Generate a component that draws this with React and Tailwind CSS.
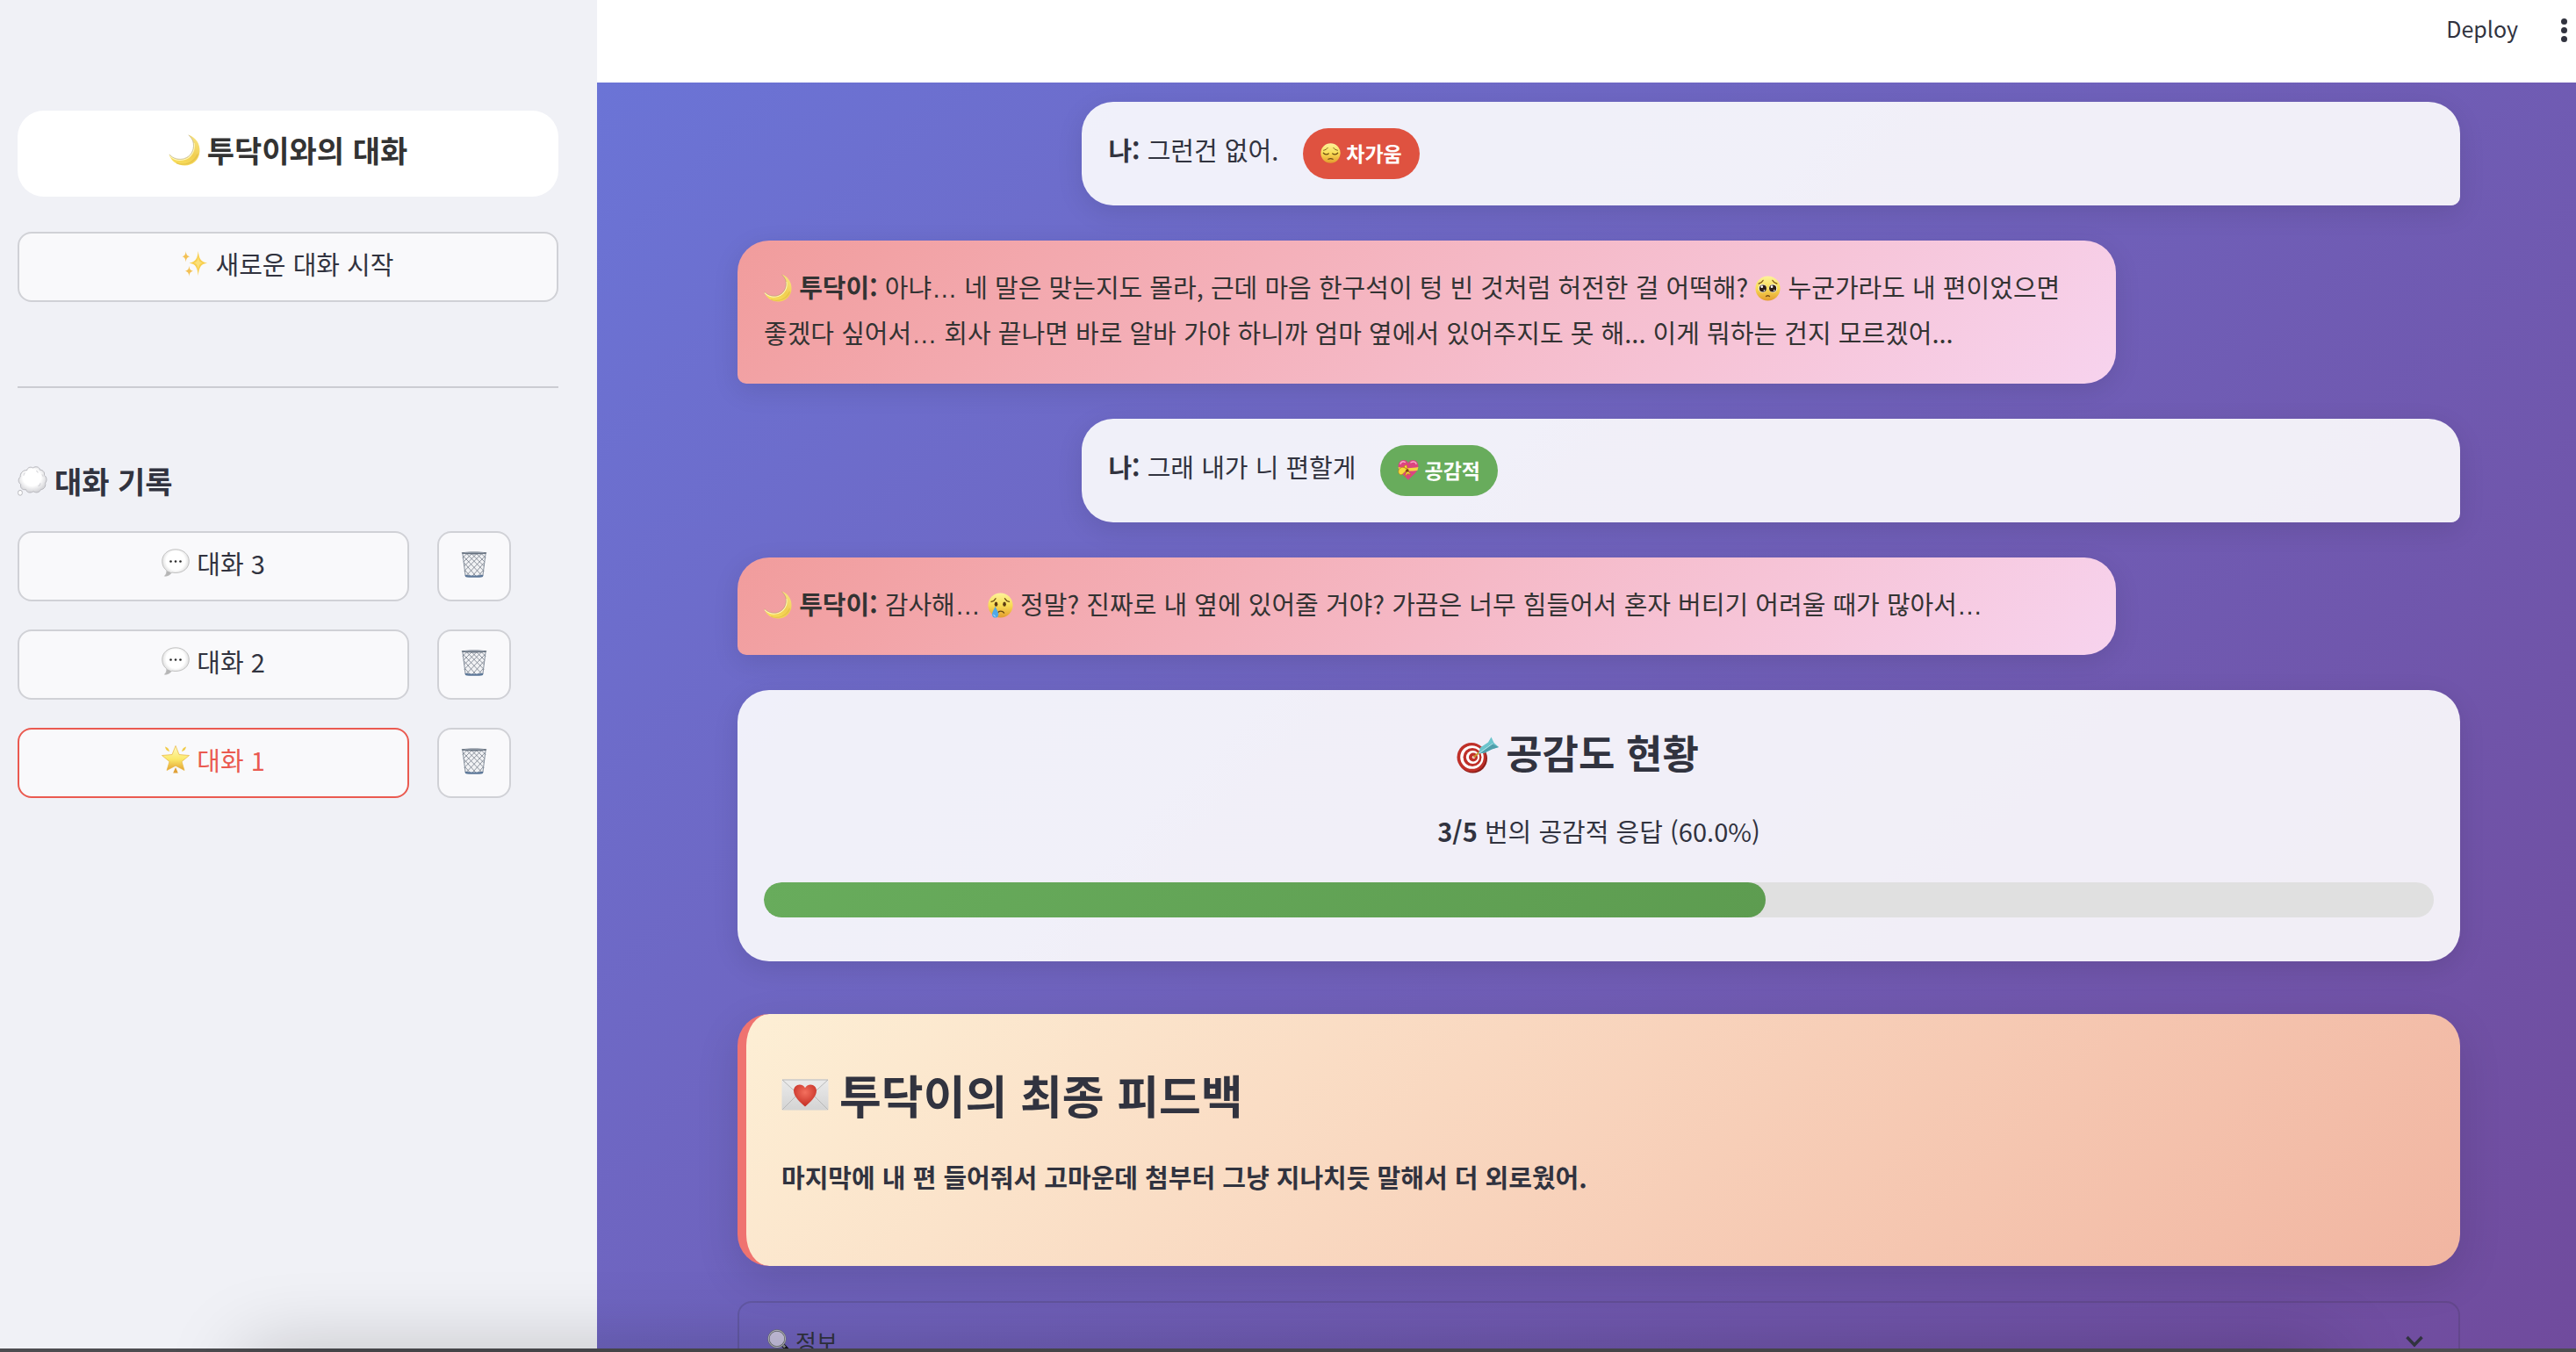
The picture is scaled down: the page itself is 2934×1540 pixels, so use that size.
import React from "react";

function Icon({ label, className, viewBox = "0 0 32 32", children }) {
  return (
    <svg role="img" aria-label={label} viewBox={viewBox} className={"inline-block shrink-0 " + className}>
      {children}
    </svg>
  );
}

function Moon({ className, id }) {
  return (
    <Icon label="초승달" className={className}>
      <defs>
        <linearGradient id={id} x1="0.2" y1="1" x2="0.9" y2="0">
          <stop offset="0" stopColor="#f9df5c" />
          <stop offset="0.5" stopColor="#f1cf52" />
          <stop offset="1" stopColor="#f8e587" />
        </linearGradient>
      </defs>
      <path d="M20 0.5C27.500 3 32 9.500 31.500 17.500C31 25.500 24.500 31.500 16.500 31.500C8.500 31.500 2.500 27 0.500 20.500C4.500 25 10 26.500 15.500 25C22.500 23 26.500 16.500 25.500 9.500C25 6 23 3 20 0.500Z" fill={`url(#${id})`} />
      <path d="M1 21.500C5 25.500 10.500 27 16 25.500C23 23.500 27 16.500 25.800 9" fill="none" stroke="#fff6b8" strokeWidth="1.200" />
      <path d="M0.800 20.500C5 24.800 10.500 26 15.500 24.700C22.300 22.500 26 16.500 25.200 9.500C24.800 6 23 3 20.200 0.800" fill="none" stroke="#a89a6c" strokeWidth="0.700" opacity="0.700" />
      <path d="M8 29C16 32.500 26 29 29.500 20" fill="none" stroke="#d9b43f" strokeWidth="1.200" opacity="0.500" />
    </Icon>
  );
}

function Sparkles({ className }) {
  return (
    <Icon label="반짝임" className={className}>
      <path d="M20 1C21 9.500 22.500 14 31 15.500C22.500 17 21 21.500 20 31C19 21.500 17.500 17 9 15.500C17.500 14 19 9.500 20 1Z" fill="#f8cf4e" />
      <path d="M20 7C20.500 12.500 21.500 15 26 15.500C21.500 16 20.500 19 20 24.500C19.500 19 18.500 16 14 15.500C18.500 15 19.500 12.500 20 7Z" fill="#fbe07a" />
      <path d="M5 1C5.400 5.300 6.500 7 10 7.700C6.500 8.400 5.400 10.200 5 14.500C4.600 10.200 3.500 8.400 0.500 7.700C3.500 7 4.600 5.300 5 1Z" fill="#f3c155" />
      <path d="M9 19C9.400 23.200 10.600 24.700 14 25.400C10.600 26.100 9.400 27.700 9 32C8.600 27.700 7.400 26.100 4 25.400C7.400 24.700 8.600 23.200 9 19Z" fill="#f3c155" />
    </Icon>
  );
}

function Thought({ className }) {
  return (
    <Icon label="생각 풍선" className={className}>
      <defs>
        <radialGradient id="thought" cx="0.48" cy="0.42" r="0.58">
          <stop offset="0.55" stopColor="#ffffff" />
          <stop offset="1" stopColor="#d2d2d6" />
        </radialGradient>
      </defs>
      <path
        d="M10 4.500C10.500 1.300 14 0.300 16.500 1.800C19.500 -0.300 23.500 0.700 24 4C27.500 4 29.500 7 28.500 9.500C31.300 11.500 32 15.500 29.700 18C30.700 21.500 28.200 25 25 25C23.500 28.500 19.500 29 17 27C13.500 29.500 9.500 28 9 25C5 26 2.500 23 3.500 19.500C0.500 17.500 0.300 13.500 3 11.500C2.500 7.500 6 4 10 4.500Z"
        fill="url(#thought)"
        stroke="#b4b5ba"
        strokeWidth="0.900"
      />
      <ellipse cx="2.800" cy="28.500" rx="2.300" ry="2.800" fill="#fff" stroke="#b4b5ba" strokeWidth="0.900" />
      <path d="M22 21.500C23.500 21 24.500 19.500 24.500 18M8 7C7 8 6.500 9 6.500 10M20 5C21 5.500 21.500 6 22 7M26 9C27 9.500 27.500 10.500 27.500 11.500" fill="none" stroke="#d6d6da" strokeWidth="1" />
    </Icon>
  );
}

function Speech({ className, id }) {
  return (
    <Icon label="말풍선" className={className}>
      <defs>
        <radialGradient id={id} cx="0.5" cy="0.42" r="0.58">
          <stop offset="0.6" stopColor="#ffffff" />
          <stop offset="1" stopColor="#cfcfcf" />
        </radialGradient>
      </defs>
      <path d="M16 0.800C24.800 0.800 31.300 6.500 31.300 14.200C31.300 22 24.800 27.500 16 27.500C14.500 27.500 13 27.400 11.700 27C10 29.500 7 31.300 3.500 31.200C5.300 29.500 6 27.500 5.800 24.800C2.600 22.500 0.700 18.800 0.700 14.200C0.700 6.500 7.200 0.800 16 0.800Z" fill={`url(#${id})`} stroke="#bcbcbc" strokeWidth="0.900" />
      <path d="M11 27.200C9.500 29.500 7 31 3.800 31C5.600 29.300 6.300 27.500 6.200 25.300Z" fill="#b5b5b5" />
      <g fill="#2a2a2a">
        <circle cx="10.500" cy="14.500" r="1.300" />
        <circle cx="16" cy="14.500" r="1.300" />
        <circle cx="21.500" cy="14.500" r="1.300" />
      </g>
    </Icon>
  );
}

function GlowStar({ className }) {
  return (
    <Icon label="빛나는 별" className={className}>
      <defs>
        <linearGradient id="star" x1="0.5" y1="0" x2="0.5" y2="1">
          <stop offset="0" stopColor="#fffbc4" />
          <stop offset="0.55" stopColor="#fbe869" />
          <stop offset="1" stopColor="#e2a233" />
        </linearGradient>
      </defs>
      <path d="M16 0.500L20 10.500L31.500 11.500L23 18.500L26 28.500L16 23.200L6 28.500L9 18.500L0.500 11.500L12 10.500Z" fill="url(#star)" stroke="#e8b53e" strokeWidth="0.700" strokeLinejoin="round" />
      <path d="M4 1.500C6.500 2 8.500 4 9 7C6 6.500 4.500 4.500 4 1.500ZM28 1.500C25.500 2 23.500 4 23 7C26 6.500 27.500 4.500 28 1.500Z" fill="#f0cb4a" />
      <path d="M16 25L18.800 31.500H13.200Z" fill="#e0a035" />
    </Icon>
  );
}

function Wastebasket({ className }) {
  return (
    <Icon label="삭제" className={className}>
      <path d="M2 2.500L5.500 30.500C8 31.800 24 31.800 26.500 30.500L30 2.500Z" fill="#f1f2f4" />
      <g stroke="#6d7683" strokeWidth="0.800" fill="none">
        <path d="M3 6L26 30M4 14L19 31M5 23L12 31M7 3L28 24M13 3L28 18M19 3L29 13M25 3L30 8" />
        <path d="M29 6L6 30M28 14L13 31M27 23L20 31M25 3L4 24M19 3L4 18M13 3L3 13M7 3L2 8" />
      </g>
      <path d="M2 2.500L5.500 30M30 2.500L26.500 30" stroke="#7c8694" strokeWidth="1" fill="none" />
      <path d="M0.800 1.200C8 0.200 24 0.200 31.200 1.200L30.800 3C24 3.900 8 3.900 1.200 3Z" fill="#66717f" />
      <path d="M4 1.900C10 1.300 22 1.300 28 1.900" stroke="#aeb6c0" strokeWidth="0.700" fill="none" />
      <path d="M5 28.500C10 29.600 22 29.600 27 28.500L26.600 30.800C23 32.200 9 32.200 5.400 30.800Z" fill="#5d7899" />
    </Icon>
  );
}

function FaceBase({ id }) {
  return (
    <>
      <defs>
        <linearGradient id={id} x1="0.5" y1="0" x2="0.5" y2="1">
          <stop offset="0" stopColor="#fdf39a" />
          <stop offset="0.5" stopColor="#f8dc55" />
          <stop offset="1" stopColor="#e39c2e" />
        </linearGradient>
      </defs>
      <circle cx="16" cy="16" r="15.500" fill={`url(#${id})`} />
    </>
  );
}

function Pensive({ className }) {
  return (
    <Icon label="시무룩한 얼굴" className={className}>
      <FaceBase id="pensive" />
      <g fill="none" stroke="#6b4a12" strokeWidth="1.700" strokeLinecap="round">
        <path d="M4.500 15.500C6.500 18.500 11 18.500 13 16.500M27.500 15.500C25.500 18.500 21 18.500 19 16.500M12.500 25.500C14.500 24.300 17.500 24.300 19.500 25.500" />
        <path d="M5 11.500C7.500 11 10 9.500 11.500 7.500M27 11.500C24.500 11 22 9.500 20.500 7.500" strokeWidth="1.200" />
      </g>
    </Icon>
  );
}

function Pleading({ className }) {
  return (
    <Icon label="애원하는 얼굴" className={className}>
      <FaceBase id="pleading" />
      <circle cx="9.500" cy="16" r="5.200" fill="#fff" />
      <circle cx="22.500" cy="16" r="5.200" fill="#fff" />
      <circle cx="9.800" cy="16" r="4.500" fill="#2c1c14" />
      <circle cx="22.200" cy="16" r="4.500" fill="#2c1c14" />
      <g fill="#fff">
        <circle cx="8.500" cy="14" r="1.500" />
        <circle cx="21" cy="14" r="1.500" />
        <circle cx="11.500" cy="18.500" r="0.900" />
        <circle cx="24" cy="18.500" r="0.900" />
      </g>
      <path d="M4.500 10C6.500 9.500 9 8 10 6M27.500 10C25.500 9.500 23 8 22 6M13.800 26C15 25 17 25 18.200 26" fill="none" stroke="#7a4f12" strokeWidth="1.400" strokeLinecap="round" />
    </Icon>
  );
}

function Crying({ className }) {
  return (
    <Icon label="우는 얼굴" className={className}>
      <FaceBase id="crying" />
      <ellipse cx="10.500" cy="14.500" rx="2" ry="2.900" fill="#5a3a12" />
      <ellipse cx="21" cy="14.500" rx="2" ry="2.900" fill="#5a3a12" />
      <path d="M4.500 11.500C7 11 9 9.500 10 7.500M27 11.500C24.500 11 22.500 9.500 21.500 7.500M12.500 25.500C14 22.500 18.500 22.500 20.500 25.500" fill="none" stroke="#6b4a12" strokeWidth="1.500" strokeLinecap="round" />
      <path d="M9.500 17.500C11 21.500 13.500 24.500 13.500 27.500C13.500 30 11.700 31.500 9.500 31.500C7.300 31.500 5.500 30 5.500 27.500C5.500 24.500 8 21.500 9.500 17.500Z" fill="#4fa9e8" />
      <path d="M7.500 27.500C7.700 29 8.500 29.800 9.800 29.800" fill="none" stroke="#bfe3fb" strokeWidth="1.100" />
    </Icon>
  );
}

function RibbonHeart({ className }) {
  return (
    <Icon label="리본 달린 하트" className={className}>
      <path d="M16 31.500C11 25.500 0.800 19.500 0.800 10.500C0.800 5 4.500 1.200 9 1.200C12.500 1.200 15 3.200 16 6C17 3.200 19.500 1.200 23 1.200C27.500 1.200 31.200 5 31.200 10.500C31.200 19.500 21 25.500 16 31.500Z" fill="#dc4580" />
      <path d="M4 7C5 4 8 3 11 4.500M20 5C23 3 27 4 28 7" fill="none" stroke="#f7a9c9" strokeWidth="2" strokeLinecap="round" />
      <path d="M0.800 12C8 14 22 14 31.200 12L30 17C22 18.500 9 18.500 2.500 17.500Z" fill="#f4d743" />
      <path d="M14 15C8 10 2 13 1 18C0.500 22 4 25 7 23C10 21 12 18 14 15ZM14 15C15.500 9 12 7 10 11C9 13 12 14 14 15ZM14 15L20 24L15 22L11 27Z" fill="#f6dc3c" stroke="#b8731c" strokeWidth="0.900" />
      <path d="M12 16.500L16 14.500L17 18.500L13 20Z" fill="#7d4213" />
    </Icon>
  );
}

function Target({ className }) {
  return (
    <Icon label="과녁" className={className} viewBox="0 0 48 42">
      <ellipse cx="18.500" cy="25" rx="16.500" ry="16.500" fill="#8e1f1a" />
      <circle cx="17" cy="23.500" r="16.500" fill="#bf3029" />
      <circle cx="17.500" cy="23.500" r="13.300" fill="#fff" />
      <circle cx="18" cy="23.500" r="10.500" fill="#bf3029" />
      <circle cx="18.500" cy="23.500" r="7.600" fill="#fff" />
      <circle cx="19" cy="23.500" r="5" fill="#bf3029" />
      <circle cx="19.500" cy="23.500" r="1.800" fill="#f3d9d4" />
      <path d="M19.500 23.500L27 17" stroke="#c9952b" strokeWidth="2" />
      <path d="M25 19.500L27 12.500L36 6.500L39.500 0.500L42.500 7L48 12L40 14.500L32 18.500Z" fill="#6cc5cd" />
      <path d="M26 19L40 8L48 12L40 14.500L32 18.500Z" fill="#4e9fab" />
      <path d="M25.500 19.200L41 8" stroke="#b9ecef" strokeWidth="1" />
    </Icon>
  );
}

function LoveLetter({ className }) {
  return (
    <Icon label="러브레터" className={className} viewBox="0 0 54 36">
      <defs>
        <linearGradient id="paper" x1="0" y1="0" x2="0" y2="1">
          <stop offset="0" stopColor="#ebebeb" />
          <stop offset="1" stopColor="#d3d3d3" />
        </linearGradient>
        <radialGradient id="seal" cx="0.5" cy="0.35" r="0.6">
          <stop offset="0" stopColor="#f4705e" />
          <stop offset="1" stopColor="#c73228" />
        </radialGradient>
      </defs>
      <rect x="0.500" y="0.500" width="53" height="35" rx="1" fill="url(#paper)" />
      <path d="M1 35L20 16M53 35L34 16" stroke="#b3b3b3" strokeWidth="0.900" />
      <path d="M1 1L23 21C25.500 23 28.500 23 31 21L53 1Z" fill="#e9e9e9" stroke="#b3b3b3" strokeWidth="0.900" />
      <path d="M27 31.500C22 27 14 20.500 14 13.500C14 9.500 17 6.500 20.700 6.500C23.500 6.500 26 8 27 10.300C28 8 30.500 6.500 33.300 6.500C37 6.500 40 9.500 40 13.500C40 20.500 32 27 27 31.500Z" fill="url(#seal)" />
    </Icon>
  );
}

function Magnifier({ className }) {
  return (
    <Icon label="돋보기" className={className}>
      <path d="M20.500 21L30 31" stroke="#17171b" strokeWidth="5" strokeLinecap="round" />
      <path d="M19 19L23 23.500" stroke="#8d8f99" strokeWidth="3" />
      <circle cx="12.500" cy="12.500" r="10.800" fill="#c6c0dd" stroke="#6b6d75" strokeWidth="2.600" />
      <circle cx="12.500" cy="12.500" r="11" fill="none" stroke="#d3d4da" strokeWidth="0.900" />
    </Icon>
  );
}

const chats = [
  { name: "대화 3", active: false },
  { name: "대화 2", active: false },
  { name: "대화 1", active: true },
];

const buttonBase =
  "flex h-20 items-center justify-center rounded-2xl border-2 bg-[#f9f9fb] text-[29px] leading-none";

function Sidebar() {
  return (
    <aside className="flex w-[680px] shrink-0 flex-col bg-[#f0f1f6] pt-[126px] pr-11 pl-5">
      <div className="flex h-[98px] items-center justify-center gap-2 rounded-[30px] bg-white pb-2 text-[34px] font-bold text-[#333]">
        <Moon id="moon-title" className="size-9" />
        <span>투닥이와의 대화</span>
      </div>
      <button type="button" className={`${buttonBase} mt-10 gap-2 border-[#d0d1d6] pb-2`}>
        <Sparkles className="size-[30px]" />
        <span>새로운 대화 시작</span>
      </button>
      <hr className="mt-24 border-t-2 border-[#cbccd2]" />
      <h2 className="mt-[78px] flex h-14 items-center gap-2 text-[34px] font-bold">
        <Thought className="size-[34px]" />
        <span>대화 기록</span>
      </h2>
      <ul className="mt-[29px] flex flex-col gap-8">
        {chats.map((chat, i) => (
          <li key={chat.name} className="flex gap-8">
            <button
              type="button"
              className={`${buttonBase} w-[446px] gap-2 pb-2 ${chat.active ? "border-[#ea5a50] text-[#ea5a50]" : "border-[#d0d1d6]"}`}
            >
              {chat.active ? <GlowStar className="size-8" /> : <Speech id={`speech-${i}`} className="size-8" />}
              <span>{chat.name}</span>
            </button>
            <button type="button" aria-label={`${chat.name} 삭제`} className={`${buttonBase} w-[84px] border-[#d0d1d6] pb-1`}>
              <Wastebasket className="h-8 w-[30px]" />
            </button>
          </li>
        ))}
      </ul>
    </aside>
  );
}

function UserMessage({ text, badge, badgeClass, icon }) {
  return (
    <div className="flex w-4/5 items-start gap-7 self-end rounded-[36px] rounded-br-[10px] bg-white/90 p-[30px] shadow-[0_8px_30px_rgba(0,0,0,0.1)]">
      <p className="leading-[48px]">
        <strong>나:</strong> {text}
      </p>
      <span className={`flex h-[58px] items-center gap-[6px] rounded-[30px] px-5 pb-[2px] text-[23px] font-bold text-white ${badgeClass}`}>
        {icon}
        <span>{badge}</span>
      </span>
    </div>
  );
}

function BotMessage({ id, children }) {
  return (
    <div className="w-4/5 rounded-[36px] rounded-bl-[10px] bg-linear-135 from-[#f19c9c] to-[#f7d3ee] px-[30px] pt-[26px] pb-[33px] break-keep text-[#333] shadow-[0_8px_30px_rgba(0,0,0,0.1)]">
      <p>
        <Moon id={id} className="size-8 align-[-5px]" /> <strong>투닥이:</strong> {children}
      </p>
    </div>
  );
}

function Ellipsis() {
  return <span className="font-['Liberation_Sans',sans-serif] leading-none">…</span>;
}

function EmpathyCard({ count, total }) {
  const percent = (count / total) * 100;
  return (
    <section className="rounded-[36px] bg-white/90 px-[30px] pt-[30px] pb-[50px] shadow-[0_8px_30px_rgba(0,0,0,0.1)]">
      <h3 className="flex h-[88px] items-center justify-center gap-2 pr-12 text-[45px] leading-none font-bold">
        <Target className="h-[42px] w-12" />
        <span className="pb-2">공감도 현황</span>
      </h3>
      <p className="mt-4 text-center">
        <strong>
          {count}/{total}
        </strong>{" "}
        번의 공감적 응답 ({percent.toFixed(1)}%)
      </p>
      <div
        role="progressbar"
        aria-label="공감도"
        aria-valuenow={percent}
        className="mt-[33px] h-10 overflow-hidden rounded-[20px] bg-[#e0e0e0]"
      >
        <div className="h-full rounded-[20px] bg-linear-135 from-[#68ac5c] to-[#5d9c50]" style={{ width: `${percent}%` }} />
      </div>
    </section>
  );
}

function FeedbackCard() {
  return (
    <section className="mt-5 rounded-[36px] border-l-10 border-[#ef7370] bg-linear-135 from-[#fdefd5] to-[#f1b5a1] px-10 pt-[57px] pb-[76px] shadow-[0_16px_50px_rgba(0,0,0,0.12)]">
      <h2 className="flex items-center gap-3 text-[52px] leading-[70px] font-bold">
        <LoveLetter className="h-9 w-[54px]" />
        <span>투닥이의 최종 피드백</span>
      </h2>
      <p className="mt-8 font-bold">마지막에 내 편 들어줘서 고마운데 첨부터 그냥 지나치듯 말해서 더 외로웠어.</p>
    </section>
  );
}

export default function App() {
  return (
    <div
      lang="ko"
      className="relative flex h-screen overflow-hidden font-['Noto_Sans_CJK_KR','Noto_Sans',sans-serif] text-[29px] leading-[52px] text-[#31333f]"
    >
      <Sidebar />
      <div className="flex min-w-0 flex-1 flex-col">
        <header className="flex h-[94px] shrink-0 items-start justify-end gap-12 bg-white pt-[14px] pr-[10px]">
          <button type="button" className="text-[25px] leading-9">
            Deploy
          </button>
          <button type="button" aria-label="메뉴" className="flex h-10 w-2 flex-col items-center justify-center gap-[3px]">
            <span className="size-[7px] shrink-0 rounded-full bg-[#31333f]" />
            <span className="size-[7px] shrink-0 rounded-full bg-[#31333f]" />
            <span className="size-[7px] shrink-0 rounded-full bg-[#31333f]" />
          </button>
        </header>
        <main className="flex min-h-0 flex-1 flex-col gap-10 overflow-hidden bg-linear-135 from-[#6b74d6] to-[#704b9d] pt-[22px] pr-[132px] pl-40 *:shrink-0">
          <UserMessage text="그런건 없어." badge="차가움" badgeClass="bg-[#df5240]" icon={<Pensive className="size-[23px]" />} />
          <BotMessage id="moon-1">
            아냐
            <Ellipsis /> 네 말은 맞는지도 몰라, 근데 마음 한구석이 텅 빈 것처럼 허전한 걸 어떡해?{" "}
            <Pleading className="size-[29px] align-[-4px]" /> 누군가라도 내 편이었으면 좋겠다 싶어서
            <Ellipsis /> 회사 끝나면 바로 알바 가야 하니까 엄마 옆에서 있어주지도 못 해... 이게 뭐하는 건지 모르겠어...
          </BotMessage>
          <UserMessage text="그래 내가 니 편할게" badge="공감적" badgeClass="bg-[#68ac5c]" icon={<RibbonHeart className="size-6" />} />
          <BotMessage id="moon-2">
            감사해
            <Ellipsis /> <Crying className="size-[29px] align-[-4px]" /> 정말? 진짜로 내 옆에 있어줄 거야? 가끔은 너무 힘들어서
            혼자 버티기 어려울 때가 많아서
            <Ellipsis />
          </BotMessage>
          <EmpathyCard count={3} total={5} />
          <FeedbackCard />
          <details className="rounded-2xl border-2 border-[#31333f]/20">
            <summary className="flex list-none items-center px-8 pt-[18px] pb-6 text-[26px]">
              <Magnifier className="size-7" />
              <span className="ml-1 flex-1">정보</span>
              <svg viewBox="0 0 20 14" className="mr-2 h-[14px] w-5" fill="none" stroke="#31333f" strokeWidth="3.500" aria-hidden="true">
                <path d="M1.500 2L10 11L18.500 2" />
              </svg>
            </summary>
          </details>
        </main>
      </div>
      <div className="pointer-events-none absolute inset-x-0 bottom-0 h-1 bg-[#4c4c50]" />
      <div className="pointer-events-none absolute inset-x-70 top-full h-20 shadow-[0_0_90px_rgba(0,0,0,0.22)]" />
    </div>
  );
}
